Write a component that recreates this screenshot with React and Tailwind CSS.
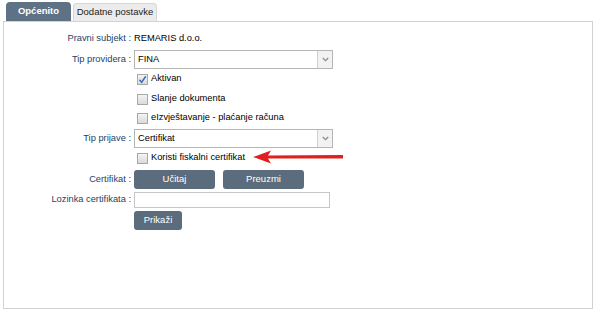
import React from "react";

const font = { fontFamily: '"Liberation Sans", Arial, sans-serif' };

function Label({ children }) {
  return (
    <div className="w-[130px] shrink-0 text-right text-[9.3px] leading-none text-[#243f63] pr-[3px] whitespace-nowrap">
      {children}
    </div>
  );
}

function Select({ value }) {
  return (
    <div className="w-[199px] h-[19px] border border-[#b5b5b5] bg-white flex items-stretch">
      <div className="flex-1 flex items-center pl-[3px] text-[9.3px] text-black">{value}</div>
      <div className="w-[15px] border-l border-[#cfcfcf] bg-[#f2f2f2] flex items-center justify-center">
        <svg width="7" height="5" viewBox="0 0 7 5">
          <path d="M0.8 1 L3.5 3.7 L6.2 1" fill="none" stroke="#888" strokeWidth="1.2" />
        </svg>
      </div>
    </div>
  );
}

function Check({ checked, label }) {
  return (
    <div className="flex items-center gap-[3px] pl-[3px]">
      <div className="w-[11px] h-[11px] border border-[#a8a8a8] bg-gradient-to-b from-[#f4f4f4] to-[#dadada] flex items-center justify-center">
        {checked && (
          <svg width="9" height="9" viewBox="0 0 9 9">
            <path d="M1.5 4.8 L3.6 7.2 L7.8 1.2" fill="none" stroke="#3f6fb5" strokeWidth="1.5" />
          </svg>
        )}
      </div>
      <span className="text-[9.3px] text-black whitespace-nowrap">{label}</span>
    </div>
  );
}

function Btn({ children, w }) {
  return (
    <div className={`${w} h-[19px] rounded-[3px] bg-[#5b6c7c] text-white text-[9.5px] flex items-center justify-center`}>
      {children}
    </div>
  );
}

export default function App() {
  return (
    <div className="w-[600px] h-[315px] bg-white relative" style={font}>
      <div className="flex items-end pl-[6px] pt-[2px] gap-[2px] h-[21px]">
        <div className="w-[65px] h-[19px] rounded-t-[4px] bg-[#5f7285] text-white text-[9.5px] font-bold flex items-center justify-center">
          Općenito
        </div>
        <div className="w-[84px] h-[18px] rounded-t-[4px] bg-[#ececec] border border-b-0 border-[#d6d6d6] text-[#222] text-[9.5px] flex items-center justify-center whitespace-nowrap">
          Dodatne postavke
        </div>
      </div>
      <div className="ml-[3px] w-[590px] h-[288px] border border-[#d2d2d2] pt-[8px]">
        <div className="flex items-center h-[18px]">
          <Label>Pravni subjekt :</Label>
          <span className="text-[9.3px] text-black">REMARIS d.o.o.</span>
        </div>
        <div className="flex items-center mt-[2px]">
          <Label>Tip providera :</Label>
          <Select value="FINA" />
        </div>
        <div className="flex items-center h-[18px] mt-[1px]">
          <div className="w-[130px]" />
          <Check checked label="Aktivan" />
        </div>
        <div className="flex items-center h-[18px] mt-[2px]">
          <div className="w-[130px]" />
          <Check label="Slanje dokumenta" />
        </div>
        <div className="flex items-center h-[18px] mt-[1px]">
          <div className="w-[130px]" />
          <Check label="eIzvještavanje - plaćanje računa" />
        </div>
        <div className="flex items-center mt-[2px]">
          <Label>Tip prijave :</Label>
          <Select value="Certifikat" />
        </div>
        <div className="flex items-center h-[18px] mt-[1px] relative">
          <div className="w-[130px]" />
          <Check label="Koristi fiskalni certifikat" />
          <svg className="absolute left-[249px] top-[0px]" width="92" height="16" viewBox="0 0 92 16">
            <path d="M0 8 L18 1.5 L15 6.6 L90 6 L90 9.4 L15 9.6 L18 14.5 Z" fill="#e0201e" />
          </svg>
        </div>
        <div className="flex items-center mt-[3px]">
          <Label>Certifikat :</Label>
          <div className="flex gap-[8px]">
            <Btn w="w-[81px]">Učitaj</Btn>
            <Btn w="w-[81px]">Preuzmi</Btn>
          </div>
        </div>
        <div className="flex items-center mt-[3px]">
          <Label>Lozinka certifikata :</Label>
          <div className="w-[196px] h-[16px] border border-[#c6c6c6] bg-white" />
        </div>
        <div className="flex items-center mt-[3px]">
          <div className="w-[130px]" />
          <Btn w="w-[48px]">Prikaži</Btn>
        </div>
      </div>
    </div>
  );
}
